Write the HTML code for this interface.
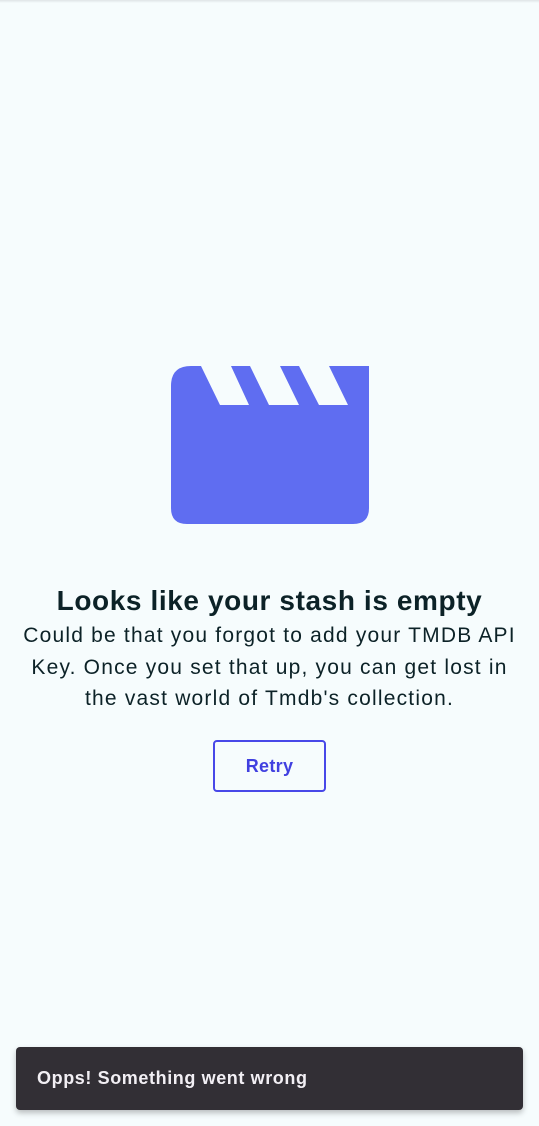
<!DOCTYPE html>
<html><head><meta charset="utf-8"><style>
html,body{margin:0;padding:0}
body{width:539px;height:1126px;background:#f6fcfd;position:relative;overflow:hidden;font-family:"Liberation Sans",sans-serif;color:#0c2227}
.top{position:absolute;left:0;top:0;width:539px;height:3px;background:linear-gradient(#dfe4e6,#f6fcfd)}
svg{position:absolute;left:0;top:0}
h1{position:absolute;left:0;width:539px;top:583px;margin:0;text-align:center;font-size:28px;font-weight:bold;letter-spacing:0.6px;line-height:36px;white-space:nowrap}
p{position:absolute;left:0;width:539px;top:620px;margin:0;text-align:center;font-size:21px;line-height:31.5px;letter-spacing:1.2px;white-space:nowrap}
.btn{position:absolute;left:213px;top:740px;width:113px;height:52px;border:2px solid #4848e8;border-radius:4px;box-sizing:border-box;display:flex;align-items:center;justify-content:center;color:#4040e0;font-weight:bold;font-size:18px;letter-spacing:0.3px}
.snack{position:absolute;left:16px;top:1047px;width:507px;height:63px;background:#322f35;border-radius:4px;box-shadow:0 3px 6px rgba(0,0,0,.25);color:#f2eff4;font-weight:bold;font-size:18px;line-height:63px;padding-left:21px;box-sizing:border-box;letter-spacing:0.6px}
</style></head><body>
<div class="top"></div>
<svg width="539" height="1126">
<path d="M191 366 H369 V508 Q369 524 353 524 H187 Q171 524 171 508 V386 Q171 366 191 366Z" fill="#5f6df1"/>
<path d="M201 366 H231 L249 405 H220Z M250 366 H280 L299 405 H269Z M299 366 H329 L348 405 H319Z" fill="#f6fcfd"/>
</svg>
<h1>Looks like your stash is empty</h1>
<p>Could be that you forgot to add your TMDB API<br>Key. Once you set that up, you can get lost in<br>the vast world of Tmdb's collection.</p>
<div class="btn">Retry</div>
<div class="snack">Opps! Something went wrong</div>
</body></html>
